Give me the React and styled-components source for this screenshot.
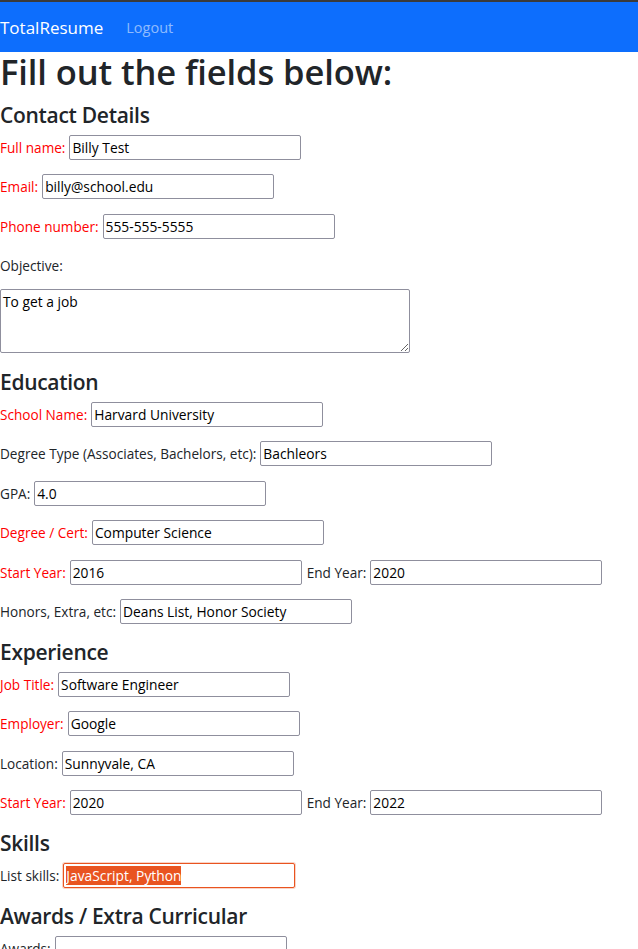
import React, { useEffect, useRef } from 'react';
import styled, { createGlobalStyle } from 'styled-components';

const GlobalStyle = createGlobalStyle`
  body {
    margin: 0;
    font-family: "Open Sans", "Noto Sans", sans-serif;
    color: #212529;
    background: #fff;
  }
`;

const NavBar = styled.nav`
  display: flex;
  align-items: center;
  height: 50px;
  border-top: 2px solid #3a3a3a;
  background: #0d6efd;
`;

const Brand = styled.a`
  font-size: 17px;
  color: #fff;
  margin-right: 23px;
  text-decoration: none;
`;

const NavLink = styled.a`
  font-size: 14.5px;
  color: rgba(255, 255, 255, 0.55);
  text-decoration: none;
`;

const Main = styled.main`
  padding: 0;
`;

const Title = styled.h1`
  margin: 0 0 10px;
  font-size: 34.5px;
  font-weight: 600;
  line-height: 40px;
  letter-spacing: -0.1px;
`;

const SectionTitle = styled.h4`
  margin: 0 0 6.25px;
  font-size: 21px;
  font-weight: 600;
  line-height: 27px;
  letter-spacing: -0.3px;
`;

const Row = styled.div`
  display: flex;
  align-items: center;
  height: 24px;
  margin-bottom: 15.5px;
  font-size: 13.6px;
`;

const Label = styled.label`
  color: ${({ required }) => (required ? '#ff0000' : '#212529')};
  margin-right: 4px;
  white-space: nowrap;
`;

const Input = styled.input`
  box-sizing: border-box;
  width: ${({ width }) => width || '232px'};
  height: 25px;
  margin-right: 5px;
  padding: 0 2px;
  font-family: inherit;
  font-size: 13.8px;
  color: #000;
  border: 1px solid #8f8f9d;
  border-radius: 2px;
  outline: none;

  &:focus {
    border-color: #e95420;
    box-shadow: 0 0 0 1px rgba(233, 84, 32, 0.25);
  }

  &::selection {
    background: #e95420;
    color: #fff;
  }
`;

const TextArea = styled.textarea`
  display: block;
  box-sizing: border-box;
  width: 410px;
  height: 64px;
  margin: -4.5px 0 16px;
  padding: 2px 2px;
  font-family: inherit;
  font-size: 13.8px;
  color: #000;
  border: 1px solid #8f8f9d;
  border-radius: 2px;
  resize: both;
`;

const Field = ({ label, value, required, width }) => (
  <>
    <Label required={required}>{label}</Label>
    <Input defaultValue={value} width={width} />
  </>
);

export default function App() {
  const skillsRef = useRef(null);

  useEffect(() => {
    if (skillsRef.current) {
      skillsRef.current.focus({ preventScroll: true });
      skillsRef.current.select();
    }
  }, []);

  return (
    <>
      <GlobalStyle />
      <NavBar>
        <Brand href="#">TotalResume</Brand>
        <NavLink href="#">Logout</NavLink>
      </NavBar>
      <Main>
        <Title>Fill out the fields below:</Title>

        <SectionTitle>Contact Details</SectionTitle>
        <Row><Field required label="Full name:" value="Billy Test" /></Row>
        <Row><Field required label="Email:" value="billy@school.edu" /></Row>
        <Row><Field required label="Phone number:" value="555-555-5555" /></Row>
        <Row><Label>Objective:</Label></Row>
        <TextArea defaultValue="To get a job" />

        <SectionTitle>Education</SectionTitle>
        <Row><Field required label="School Name:" value="Harvard University" /></Row>
        <Row><Field label="Degree Type (Associates, Bachelors, etc):" value="Bachleors" /></Row>
        <Row><Field label="GPA:" value="4.0" /></Row>
        <Row><Field required label="Degree / Cert:" value="Computer Science" /></Row>
        <Row>
          <Field required label="Start Year:" value="2016" />
          <Field label="End Year:" value="2020" />
        </Row>
        <Row><Field label="Honors, Extra, etc:" value="Deans List, Honor Society" /></Row>

        <SectionTitle>Experience</SectionTitle>
        <Row><Field required label="Job Title:" value="Software Engineer" /></Row>
        <Row><Field required label="Employer:" value="Google" /></Row>
        <Row><Field label="Location:" value="Sunnyvale, CA" /></Row>
        <Row>
          <Field required label="Start Year:" value="2020" />
          <Field label="End Year:" value="2022" />
        </Row>

        <SectionTitle>Skills</SectionTitle>
        <Row>
          <Label>List skills:</Label>
          <Input ref={skillsRef} defaultValue="JavaScript, Python" />
        </Row>

        <SectionTitle>Awards / Extra Curricular</SectionTitle>
        <Row><Field label="Awards:" value="" /></Row>
      </Main>
    </>
  );
}
